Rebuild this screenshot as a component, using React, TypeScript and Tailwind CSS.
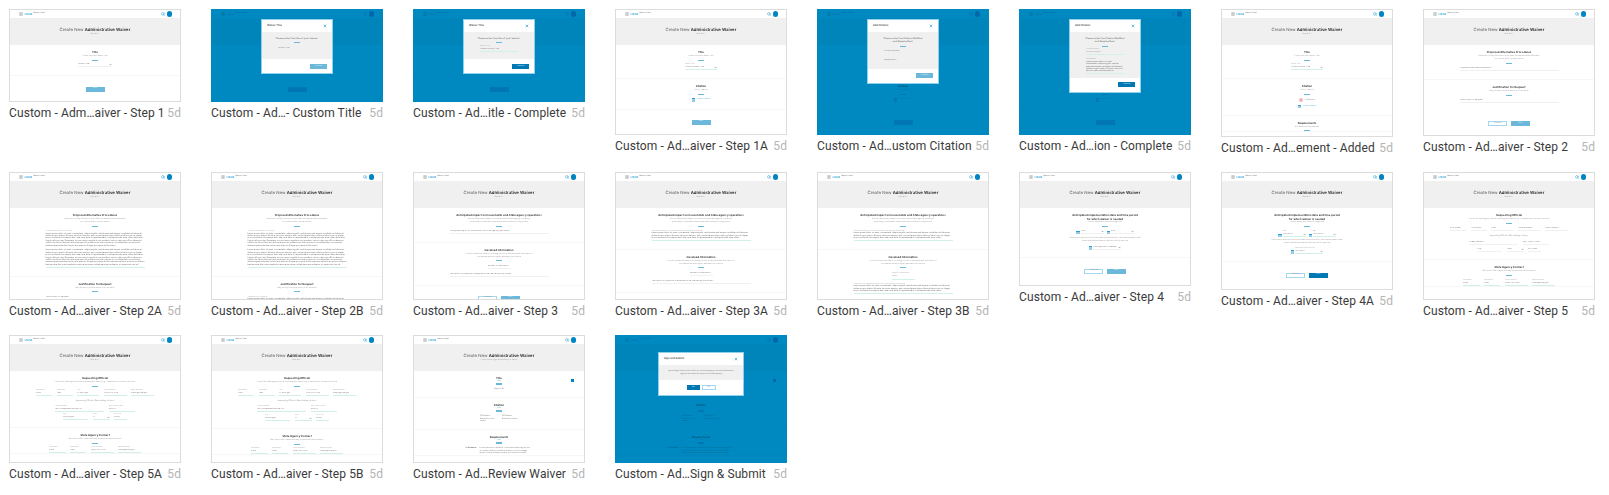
import type { ReactNode } from "react";
import { ChevronDown, Menu, Search, X } from "lucide-react";

const LOREM =
  "Lorem ipsum dolor sit amet, consectetur adipiscing elit, sed do eiusmod tempor incididunt ut labore et dolore magna aliqua. Ut enim ad minim veniam, quis nostrud exercitation ullamco laboris nisi ut aliquip ex ea commodo consequat duis aute irure dolor in reprehenderit in voluptate velit esse cillum dolore eu fugiat nulla pariatur. Excepteur sint occaecat cupidatat non proident, sunt in culpa qui officia deserunt mollit anim id est laborum sed ut perspiciatis unde omnis iste natus error sit voluptatem accusantium doloremque laudantium totam rem aperiam. Eaque ipsa quae ab illo inventore veritatis et quasi architecto beatae vitae dicta sunt explicabo nemo enim ipsam voluptatem quia voluptas sit aspernatur aut odit aut fugit sed quia consequuntur magni dolores eos qui ratione.";

function Header() {
  return (
    <div className="flex h-[8px] items-center pl-[9px] pr-[8px]">
      <Menu size={4} strokeWidth={3} className="text-[#777]" />
      <span className="ml-[1.5px] text-[2.8px] font-semibold leading-none text-[#2a9fd6]">USDA</span>
      <span className="ml-[1px] text-[1.8px] leading-none text-[#666]">Waiver Portal</span>
      <Search size={4} strokeWidth={3} className="ml-auto text-[#2a9fd6]" />
      <div className="ml-[2px] h-[5.5px] w-[5.5px] rounded-full bg-[#0085c3]" />
    </div>
  );
}

function Page({ sub = "Step # of 5", children }: { sub?: string; children: ReactNode }) {
  return (
    <>
      <Header />
      <div className="flex h-[27px] flex-col items-center bg-[#f0f0f0] pt-[9.5px]">
        <div className="text-[4.3px] leading-[5px] text-[#555]">
          Create New <span className="font-semibold text-[#222]">Administrative Waiver</span>
        </div>
        <div className="mt-[0.5px] text-[1.8px] leading-[3px] text-[#999]">{sub}</div>
      </div>
      {children}
    </>
  );
}

function Section({
  title,
  subs = [],
  className = "",
  children,
}: {
  title: ReactNode;
  subs?: string[];
  className?: string;
  children?: ReactNode;
}) {
  return (
    <section className={`relative border-b border-[#f7f7f7] pt-[5px] text-center ${className}`}>
      <div className="text-[2.8px] font-semibold leading-[5px] text-[#222]">{title}</div>
      {subs.map((s) => (
        <div key={s} className="whitespace-nowrap text-[1.8px] leading-[3px] text-[#999]">
          {s}
        </div>
      ))}
      <div className="mx-auto mt-[1.5px] h-[1px] w-[5.5px] bg-[#6cb8da]" />
      {children}
    </section>
  );
}

function Field({
  label,
  text,
  filled = false,
  caret = false,
  className = "",
}: {
  label?: string;
  text?: string;
  filled?: boolean;
  caret?: boolean;
  className?: string;
}) {
  return (
    <div className={`border-b text-left ${filled ? "border-[#d2f1e6]" : "border-[#f0f0f0]"} ${className}`}>
      {label && <div className="truncate text-[1.7px] leading-[3px] text-[#aaa]">{label}</div>}
      <div className="flex items-center justify-between text-[2px] leading-[3px] text-[#777]">
        <span className="truncate">{text}</span>
        {caret && <ChevronDown size={3} strokeWidth={4} className="shrink-0 text-[#666]" />}
      </div>
    </div>
  );
}

function Paragraphs({ label, paras, className = "" }: { label: string; paras: number[]; className?: string }) {
  return (
    <div className={`mx-auto w-[99px] border-b border-[#d2f1e6] text-left ${className}`}>
      <div className="truncate text-[1.7px] leading-[2.6px] text-[#aaa]">{label}</div>
      {paras.map((n, i) => (
        <p key={i} className="mb-[2.4px] text-[2px] leading-[2.4px] text-[#555] last:mb-[0.5px]">
          {LOREM.slice(0, n)}
        </p>
      ))}
    </div>
  );
}

function Btn({ dark = false, outline = false, children }: { dark?: boolean; outline?: boolean; children: ReactNode }) {
  const tone = outline
    ? "border-[0.5px] border-[#a3d7ec] bg-white text-[#888]"
    : dark
      ? "bg-[#0078b4] text-[#cfe6f2]"
      : "bg-[#6cb8da] text-[#e0f0f7]";
  return (
    <div className={`flex h-[5px] w-[19px] items-center justify-center text-[1.8px] leading-none ${tone}`}>{children}</div>
  );
}

function Buttons({ dark = false, className = "" }: { dark?: boolean; className?: string }) {
  return (
    <div className={`flex justify-center gap-[3.5px] ${className}`}>
      <Btn outline>Previous</Btn>
      <Btn dark={dark}>Next</Btn>
    </div>
  );
}

function Cal({ className = "" }: { className?: string }) {
  return <div className={`h-[3.5px] w-[3.5px] shrink-0 border-t border-[#2a9fd6] bg-[#9accE4] ${className}`} />;
}

function TitleFilled() {
  return <Field label="Waiver Title" text="Custom Waiver Title" filled caret className="mx-auto mt-[2.5px] w-[32px]" />;
}

function CitationLink({ className = "" }: { className?: string }) {
  return (
    <div className={`flex items-center justify-center gap-[1px] text-[1.8px] leading-[3px] text-[#5aaed4] ${className}`}>
      <Cal className="border-0" />
      Custom Citation
    </div>
  );
}

function Step1() {
  return (
    <Page>
      <Section title="Title" subs={["Please select the Waiver Title"]} className="pb-[8px]">
        <Field text="Waiver Title*" caret className="mx-auto mt-[2.5px] w-[34px]" />
      </Section>
      <div className="mt-[10.5px] flex justify-center">
        <Btn>Next</Btn>
      </div>
    </Page>
  );
}

function Step1A() {
  return (
    <Page>
      <Section title="Title" subs={["Please select the Waiver Title"]} className="pb-[8px]">
        <TitleFilled />
      </Section>
      <Section title="Citation" subs={["Select Citations"]} className="pb-[7px]">
        <CitationLink className="mt-[3.5px]" />
      </Section>
      <div className="mt-[10px] flex justify-center">
        <Btn>Next</Btn>
      </div>
    </Page>
  );
}

function StepAdded() {
  return (
    <Page>
      <Section title="Title" subs={["Please select the Waiver Title"]} className="pb-[8px]">
        <TitleFilled />
      </Section>
      <Section title="Citation" subs={["Select Citations"]} className="pb-[6.5px]">
        <div className="mt-[3.5px] flex items-center justify-center gap-[1.5px] text-[1.8px] leading-[3px] text-[#888]">
          <div className="h-[4px] w-[4px] rounded-full bg-[#f4b6bd]" />
          CFR Number
        </div>
        <CitationLink className="mt-[2.5px]" />
      </Section>
      <Section title="Requirements" subs={["Add Waivered Requirements"]} />
    </Page>
  );
}

const ALT_SUBS = ["Required to briefly describe how the State will implement the alternative", "procedures and/or provide waiver"];

function Step2() {
  return (
    <Page>
      <Section title="Proposed Alternative Procedures" subs={ALT_SUBS} className="pb-[8px]">
        <Field text="Proposed Alternative Procedures*" className="mx-auto mt-[3.5px] w-[99px]" />
      </Section>
      <Section title="Justification for Request" subs={["Why would you like this waiver to be adopted?"]} className="border-transparent pb-[8px]">
        <Field text="Justification for Request*" className="mx-auto mt-[3.5px] w-[99px]" />
      </Section>
      <Buttons className="mt-[9px]" />
    </Page>
  );
}

function Step2A({ second = false }: { second?: boolean }) {
  return (
    <Page>
      <Section title="Proposed Alternative Procedures" subs={ALT_SUBS} className="pb-[8px]">
        <Paragraphs label="Proposed Alternative Procedures" paras={[590, 720]} className="mt-[3.5px]" />
      </Section>
      <Section title="Justification for Request" subs={["Why would you like this waiver to be adopted?"]}>
        {second ? (
          <Paragraphs label="Justification for Request" paras={[500]} className="mt-[3.5px]" />
        ) : (
          <Field text="Justification for Request*" className="mx-auto mt-[3.5px] w-[99px]" />
        )}
      </Section>
    </Page>
  );
}

const IMPACT = "Anticipated impact on households and State agency operations";
const IMPACT_SUBS = ["Describe anticipated impact on households and State agency operations,", "particularly on vulnerable participants and how they're being served"];
const CASE_SUBS = ["Provide relevant information, including reports of individuals and description of", "populations impacted by the alternative procedures"];

function Step3() {
  return (
    <Page>
      <Section title={IMPACT} subs={IMPACT_SUBS} className="pb-[7.5px]">
        <Field text="Anticipated impact on households and State agency operations*" className="mx-auto mt-[3.5px] w-[99px]" />
      </Section>
      <Section title="Caseload Information" subs={CASE_SUBS} className="pb-[7.5px]">
        <Field text="Number of individuals*" className="mx-auto mt-[3.5px] w-[23px]" />
        <Field text="Description of populations expected to be affected by the waiver*" className="mx-auto mt-[4.5px] w-[99px]" />
      </Section>
      <Buttons className="mt-[10px]" />
    </Page>
  );
}

function Step3A({ filled = false }: { filled?: boolean }) {
  return (
    <Page>
      <Section title={IMPACT} subs={IMPACT_SUBS} className="pb-[8px]">
        <Paragraphs label="Anticipated impact on households and State agency operations" paras={[300]} className="mt-[3px]" />
      </Section>
      <Section title="Caseload Information" subs={CASE_SUBS} className="pb-[7.5px]">
        {filled ? (
          <>
            <Field label="Number of individuals" text="5,000" filled className="mx-auto mt-[3.5px] w-[23px] pb-[1.5px]" />
            <Paragraphs label="Description of populations expected to be affected by the waiver" paras={[300]} className="mt-[2.5px]" />
          </>
        ) : (
          <>
            <Field text="Number of individuals*" className="mx-auto mt-[3.5px] w-[23px]" />
            <Field text="Description of populations expected to be affected by the waiver*" className="mx-auto mt-[4.5px] w-[99px]" />
          </>
        )}
      </Section>
    </Page>
  );
}

function DateField({ label, text, width, filled }: { label?: string; text: string; width: string; filled: boolean }) {
  return (
    <div className="flex items-end gap-[1px]">
      <Cal />
      <Field label={label} text={text} caret filled={filled} className={width} />
    </div>
  );
}

function Step4({ filled = false }: { filled?: boolean }) {
  const end = filled ? "mt-[1.5px]" : "mt-[2.5px]";
  return (
    <Page>
      <section className="border-b border-[#f7f7f7] pb-[7px] pt-[5px] text-center">
        <div className="text-[2.8px] font-semibold leading-[4px] text-[#222]">
          Anticipated implementation date and time period
          <br />
          for which waiver is needed
        </div>
        <div className="text-[1.8px] leading-[3.4px] text-[#999]">Provide a timeline for the following fields</div>
        <div className="mx-auto mt-[1.5px] h-[1px] w-[5.5px] bg-[#6cb8da]" />
        <div className="mt-[3.5px] flex justify-center gap-[3px]">
          <DateField label={filled ? "Start" : undefined} text={filled ? "01/01/2018" : "Start*"} width="w-[23px]" filled={filled} />
          <DateField label={filled ? "End" : undefined} text={filled ? "12/31/2018" : "End*"} width="w-[23px]" filled={filled} />
        </div>
        <div className={`${end} text-[1.8px] leading-[3.2px] text-[#999]`}>
          If the waiver approval is needed to start a particular time or the implementation date
          <br />
          please indicate and state the date needed for approval
        </div>
        <div className={`${end} flex justify-center`}>
          <DateField label={filled ? "Date approval is needed" : undefined} text={filled ? "12/01/2017" : "Date approval is needed*"} width="w-[28px]" filled={filled} />
        </div>
      </section>
      <Buttons dark={filled} className="mt-[11px]" />
    </Page>
  );
}

const CONTACT_SUBS = ["Who should FNS contact with any questions about this waiver?"];
const OFFICIAL_SUBS = ["Provide the State agency official requesting the waiver (e.g. Commissioner, Governor, Director)"];

function Row({ className = "", children }: { className?: string; children: ReactNode }) {
  return <div className={`flex justify-center gap-[4.5px] ${className}`}>{children}</div>;
}

function Step5() {
  return (
    <Page>
      <Section title="Requesting Official" subs={OFFICIAL_SUBS} className="pb-[7px]">
        <Row className="mt-[3.5px]">
          <Field text="First Name*" className="w-[16px]" />
          <Field text="Last Name*" className="w-[16px]" />
          <Field text="Title*" className="w-[22px]" />
          <Field text="Phone Number*" className="w-[23px]" />
          <Field text="Email Address*" className="w-[23px]" />
        </Row>
        <div className="mt-[3.5px] text-[1.9px] leading-[3px] text-[#888]">Requesting Official's State Mailing Address</div>
        <Row className="mt-[3.5px]">
          <Field text="Street Address*" className="w-[49px]" />
          <Field text="Apt / Suite / Other" className="w-[26px]" />
        </Row>
        <Row className="mt-[3px]">
          <Field text="City*" className="w-[25px]" />
          <Field text="State*" caret className="w-[17px]" />
          <Field text="ZIP Code*" className="w-[13px]" />
        </Row>
      </Section>
      <Section title="State Agency Contact" subs={CONTACT_SUBS}>
        <Row className="mt-[3.5px]">
          <Field label="First Name" text="David" filled className="w-[17px]" />
          <Field label="Last Name" text="Allen" filled className="w-[16px]" />
          <Field label="Phone Number" text="(202) 555-0182" filled className="w-[23px]" />
          <Field label="Email Address" text="dallen@state.gov" filled className="w-[23px]" />
        </Row>
      </Section>
    </Page>
  );
}

function Step5A({ low = false }: { low?: boolean }) {
  return (
    <Page>
      <Section title="Requesting Official" subs={OFFICIAL_SUBS} className="pb-[7px]">
        <Row className="mt-[2.5px]">
          <Field label="First Name" text="David" filled className="w-[16px]" />
          <Field label="Last Name" text="Allen" filled className="w-[16px]" />
          <Field label="Title" text="Sr. Manager" filled className="w-[22px]" />
          <Field label="Phone Number" text="(202) 555-0182" filled className="w-[23px]" />
          <Field label="Email Address" text="dallen@state.gov" filled className="w-[23px]" />
        </Row>
        <div className="mt-[3.5px] text-[1.9px] leading-[3px] text-[#888]">Requesting Official's State Mailing Address</div>
        <Row className="mt-[2px]">
          <Field label="Street Address" text="1400 Independence Ave SW" filled className="w-[49px]" />
          <Field label="Apt / Suite / Other" text="Room 5" filled className="w-[26px]" />
        </Row>
        <Row className={low ? "mt-[2.5px]" : "mt-[1.5px]"}>
          <Field label="City" text="Washington" filled className="w-[25px]" />
          <Field label="State" text="DC" filled caret className="w-[17px]" />
          <Field label="ZIP Code" text="20250" filled className="w-[13px]" />
        </Row>
      </Section>
      <Section title="State Agency Contact" subs={CONTACT_SUBS}>
        <Row className="mt-[2px]">
          <Field label="First Name" text="David" filled className="w-[17px]" />
          <Field label="Last Name" text="Allen" filled className="w-[16px]" />
          <Field label="Phone Number" text="(202) 555-0182" filled className="w-[23px]" />
          <Field label="Email Address" text="dallen@state.gov" filled className="w-[23px]" />
        </Row>
      </Section>
    </Page>
  );
}

function Review() {
  return (
    <Page sub="Please review, sign and submit your waiver">
      <Section title="Title" className="pb-[6px]">
        <div className="-mt-[3.5px] text-[1.8px] leading-[3px] text-[#5aaed4]">Edit</div>
        <div className="mx-auto mt-[1px] h-[1px] w-[5.5px] bg-[#6cb8da]" />
        <div className="absolute right-[10.5px] top-[7.5px] h-[3px] w-[3px] bg-[#0085c3]" />
        <div className="mt-[3px] text-[1.8px] leading-[3px] text-[#777]">Waiver Title</div>
      </Section>
      <Section title="Citation" className="pb-[6.5px]">
        <div className="-mt-[3.5px] text-[1.8px] leading-[3px] text-[#5aaed4]">Edit</div>
        <div className="mx-auto mt-[1px] h-[1px] w-[5.5px] bg-[#6cb8da]" />
        <div className="mt-[3px] flex justify-center gap-[3px] text-left text-[1.7px] leading-[2.5px] text-[#777]">
          <div className="w-[19px]">
            CFR Number
            <br />
            Description of the citation
          </div>
          <div className="w-[16px]">
            CFR Number
            <br />
            Description citation
          </div>
        </div>
      </Section>
      <Section title="Requirements">
        <div className="-mt-[3.5px] text-[1.8px] leading-[3px] text-[#5aaed4]">Edit</div>
        <div className="mx-auto mt-[1px] h-[1px] w-[5.5px] bg-[#6cb8da]" />
        <div className="mt-[3px] flex justify-center gap-[4px] text-left text-[1.8px] leading-[2.5px] text-[#777]">
          <div className="w-[10px] whitespace-nowrap font-medium text-[#444]">CFR Number</div>
          <div className="w-[53px]">{LOREM.slice(0, 170)}</div>
        </div>
      </Section>
    </Page>
  );
}

function ModalShell({
  title,
  wide = false,
  children,
  footer,
}: {
  title: string;
  wide?: boolean;
  children: ReactNode;
  footer: ReactNode;
}) {
  return (
    <div className={`border-[0.5px] border-[#8fd0ec] bg-white ${wide ? "w-[86px]" : "w-[72px]"}`}>
      <div className="flex h-[12px] items-center justify-between px-[5px]">
        <span className="text-[2.6px] font-medium text-[#333]">{title}</span>
        <X size={4} strokeWidth={4} className="text-[#2a9fd6]" />
      </div>
      <div className="bg-[#f0f0f0] text-center">{children}</div>
      {footer}
    </div>
  );
}

function ModalFooter({ dark = false }: { dark?: boolean }) {
  return (
    <div className="flex h-[14px] items-center justify-end pr-[5px]">
      <div className={`flex h-[5px] w-[17px] items-center justify-center text-[1.8px] text-[#e0f0f7] ${dark ? "bg-[#0078b4]" : "bg-[#6cb8da]"}`}>
        Continue
      </div>
    </div>
  );
}

function TitleModal({ done = false }: { done?: boolean }) {
  return (
    <ModalShell title="Waiver Title" footer={<ModalFooter dark={done} />}>
      <div className="h-[27px] pt-[5px]">
        <div className="text-[2.5px] leading-[3px] text-[#555]">Please enter the title of your waiver:</div>
        <div className="mx-auto mt-[2px] h-[1px] w-[5.5px] bg-[#6cb8da]" />
        {done ? (
          <Field label="Waiver Title" text="Custom Waiver Title" filled className="mx-auto mt-[1.5px] w-[38px]" />
        ) : (
          <Field text="Waiver Title*" className="mx-auto mt-[4px] w-[38px]" />
        )}
      </div>
    </ModalShell>
  );
}

function CitationModal({ done = false }: { done?: boolean }) {
  return (
    <ModalShell title="Add Citation" footer={<ModalFooter dark={done} />}>
      <div className={`${done ? "h-[45.5px]" : "h-[36.5px]"} pt-[4.5px]`}>
        <div className="text-[2.5px] leading-[3.6px] text-[#555]">
          Please enter the Citation Number
          <br />
          and Requirement.
        </div>
        <div className="mx-auto mt-[2px] h-[1px] w-[5.5px] bg-[#6cb8da]" />
        {done ? (
          <>
            <Field label="Citation Number" text="273.2(f)(1)(i)(A)" filled className="mx-auto mt-[1.5px] w-[38px]" />
            <Paragraphs label="Requirement" paras={[170]} className="mt-[3px] !w-[38px]" />
          </>
        ) : (
          <>
            <Field text="Citation Number*" className="mx-auto mt-[3.5px] w-[38px]" />
            <Field text="Requirement*" className="mx-auto mt-[4.5px] w-[38px]" />
          </>
        )}
      </div>
    </ModalShell>
  );
}

function SignModal() {
  return (
    <ModalShell
      wide
      title="Sign and Submit"
      footer={
        <div className="flex h-[15px] items-center justify-center gap-[2px]">
          <div className="flex h-[4.5px] w-[13.5px] items-center justify-center bg-[#0078b4] text-[1.8px] text-[#e0f0f7]">Yes</div>
          <div className="flex h-[4.5px] w-[13.5px] items-center justify-center border-[0.5px] border-[#a3d7ec] text-[1.8px] text-[#888]">No</div>
        </div>
      }
    >
      <div className="flex h-[15px] items-center justify-center text-[1.8px] leading-[3px] text-[#777]">
        <div>
          By sending a waiver of the SNAP you acknowledge you are the authorized to
          <br />
          sign this document on behalf of the State agency
        </div>
      </div>
    </ModalShell>
  );
}

function Frame({
  label,
  h,
  modal,
  modalTop = "pt-[9px]",
  children,
}: {
  label: string;
  h: string;
  modal?: ReactNode;
  modalTop?: string;
  children: ReactNode;
}) {
  return (
    <div>
      <div className={`overflow-hidden border ${modal ? "border-[#0089c1]" : "border-[#dcdcdc]"} ${h}`}>
        <div className="relative h-full overflow-hidden bg-white font-['Inter',sans-serif] blur-[0.3px] [text-rendering:geometricPrecision]">
          <div className={modal ? "opacity-50" : ""}>{children}</div>
          {modal && (
            <>
              <div className="absolute inset-0 bg-[#0089c1] mix-blend-multiply" />
              <div className={`absolute inset-0 flex items-start justify-center ${modalTop}`}>{modal}</div>
            </>
          )}
        </div>
      </div>
      <div className="mt-[3px] flex h-[16px] items-center justify-between whitespace-nowrap font-['Roboto',sans-serif] text-[12px] tracking-[0.1px] text-[#3a3a3a]">
        <span>{label}</span>
        <span className="text-[#b5b5b5]">5d</span>
      </div>
    </div>
  );
}

export default function App() {
  return (
    <div className="grid h-[495px] w-[1609px] grid-cols-[repeat(8,172px)] grid-rows-[163px_163px_151px] gap-x-[30px] bg-white pl-[9px] pt-[9px]">
      <Frame label="Custom - Adm…aiver - Step 1" h="h-[93px]"><Step1 /></Frame>
      <Frame label="Custom - Ad…- Custom Title" h="h-[93px]" modal={<TitleModal />}><Step1 /></Frame>
      <Frame label="Custom - Ad…itle - Complete" h="h-[93px]" modal={<TitleModal done />}><Step1 /></Frame>
      <Frame label="Custom - Ad…aiver - Step 1A" h="h-[126px]"><Step1A /></Frame>
      <Frame label="Custom - Ad…ustom Citation" h="h-[126px]" modal={<CitationModal />}><Step1A /></Frame>
      <Frame label="Custom - Ad…ion - Complete" h="h-[126px]" modal={<CitationModal done />}><Step1A /></Frame>
      <Frame label="Custom - Ad…ement - Added" h="h-[128px]"><StepAdded /></Frame>
      <Frame label="Custom - Ad…aiver - Step 2" h="h-[127px]"><Step2 /></Frame>

      <Frame label="Custom - Ad…aiver - Step 2A" h="h-[128px]"><Step2A /></Frame>
      <Frame label="Custom - Ad…aiver - Step 2B" h="h-[128px]"><Step2A second /></Frame>
      <Frame label="Custom - Ad…aiver - Step 3" h="h-[128px]"><Step3 /></Frame>
      <Frame label="Custom - Ad…aiver - Step 3A" h="h-[128px]"><Step3A /></Frame>
      <Frame label="Custom - Ad…aiver - Step 3B" h="h-[128px]"><Step3A filled /></Frame>
      <Frame label="Custom - Ad…aiver - Step 4" h="h-[114px]"><Step4 /></Frame>
      <Frame label="Custom - Ad…aiver - Step 4A" h="h-[118px]"><Step4 filled /></Frame>
      <Frame label="Custom - Ad…aiver - Step 5" h="h-[128px]"><Step5 /></Frame>

      <Frame label="Custom - Ad…aiver - Step 5A" h="h-[128px]"><Step5A /></Frame>
      <Frame label="Custom - Ad…aiver - Step 5B" h="h-[128px]"><Step5A low /></Frame>
      <Frame label="Custom - Ad…Review Waiver" h="h-[128px]"><Review /></Frame>
      <Frame label="Custom - Ad…Sign & Submit" h="h-[128px]" modal={<SignModal />} modalTop="pt-[16px]"><Review /></Frame>
    </div>
  );
}
